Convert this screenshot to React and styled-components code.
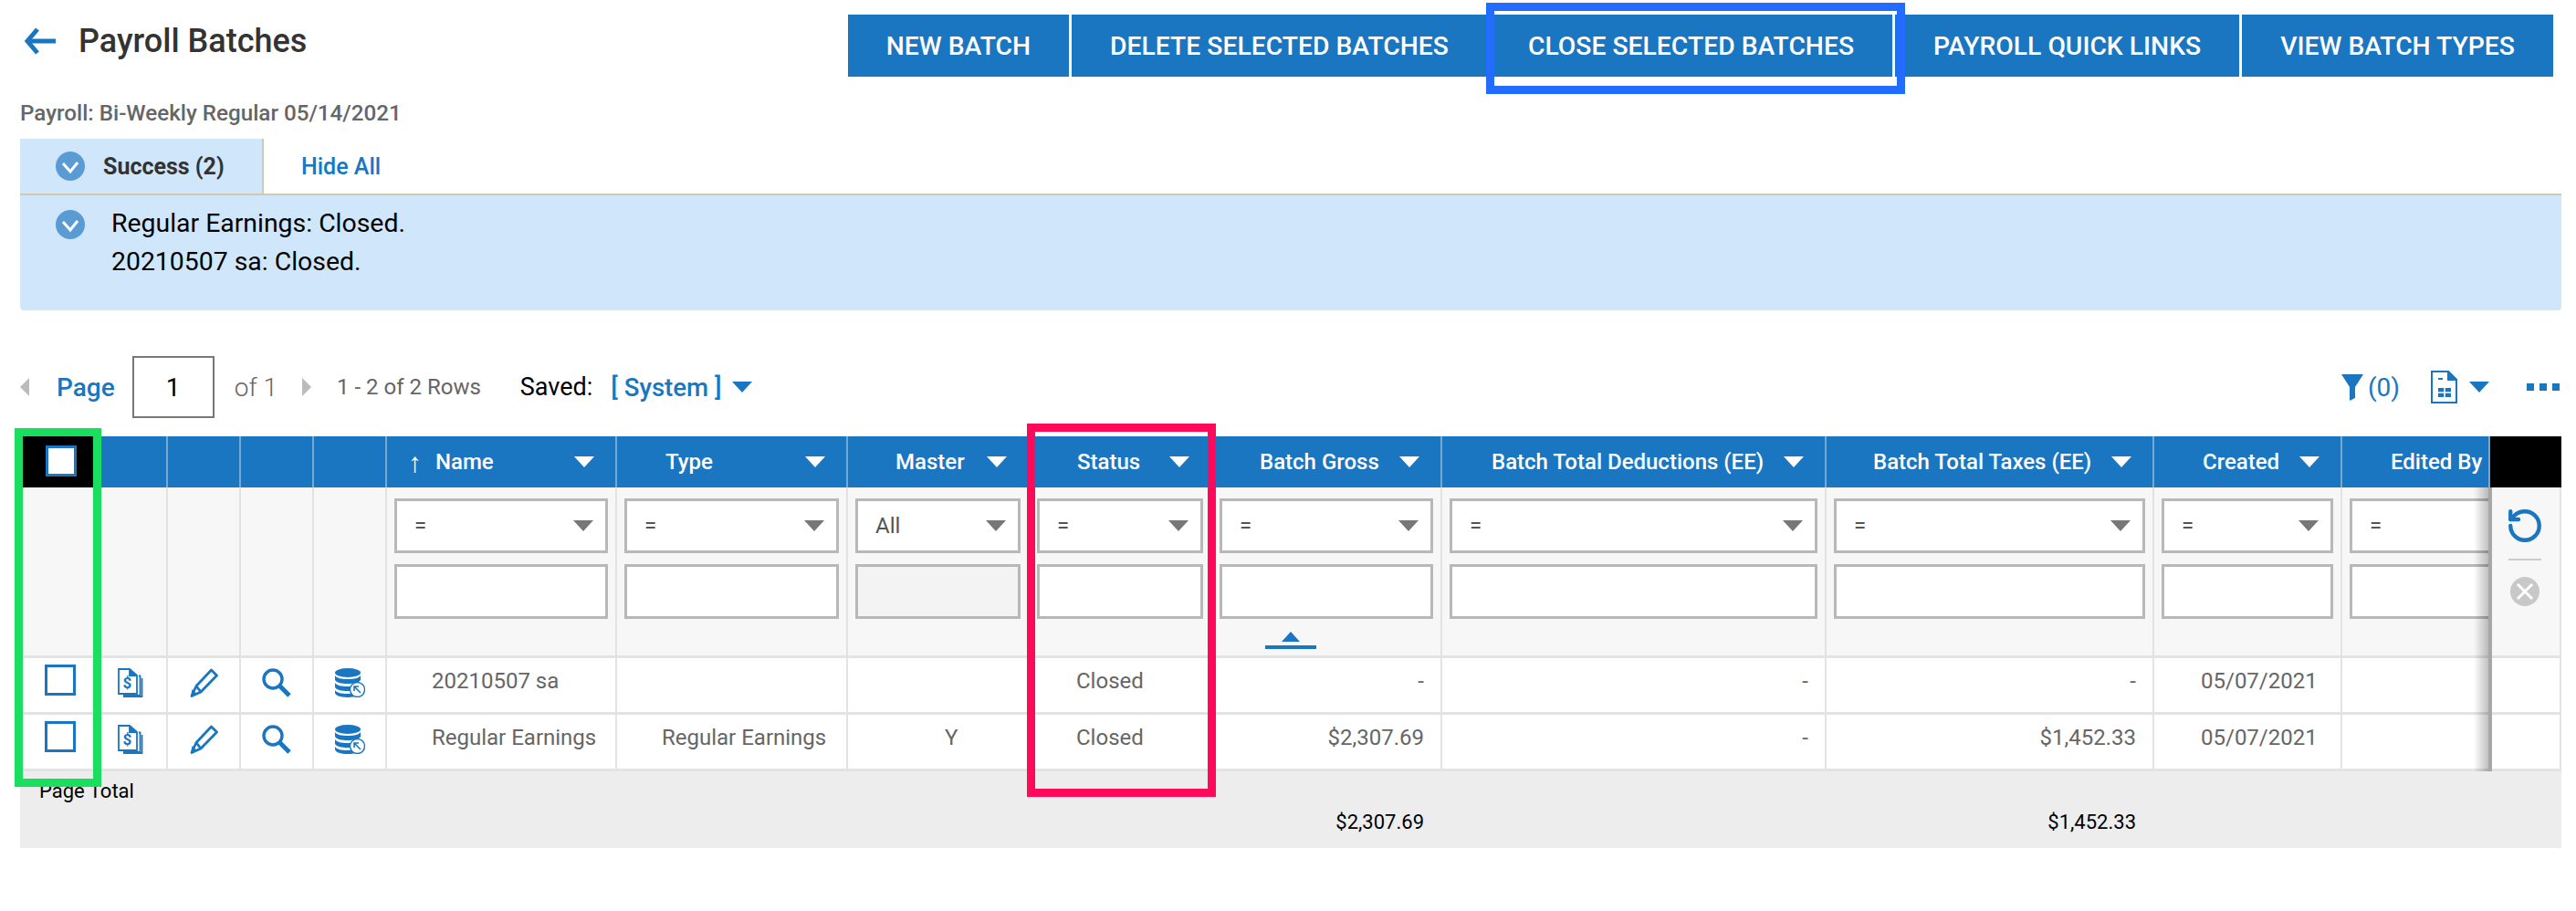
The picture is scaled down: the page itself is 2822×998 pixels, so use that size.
import { RotateCcw } from 'lucide-react';
import styled, { createGlobalStyle } from 'styled-components';

const BLUE = '#1a76c0';
const COLS = '82px 80px 80px 80px 80px 252px 253px 199px 200px 252px 421px 359px 206px 162px 78px';

const GlobalStyle = createGlobalStyle`
  html, body { margin: 0; padding: 0; background: #fff; }
  body { font-family: Roboto, "Liberation Sans", sans-serif; }
`;

const Page = styled.div`
  position: relative;
  width: 2822px;
  height: 998px;
  overflow: hidden;
  padding: 16px 16px 0 22px;
  box-sizing: border-box;
`;

const TopBar = styled.header`
  display: flex;
  justify-content: space-between;
  height: 68px;
  padding-right: 9px;
`;

const TitleWrap = styled.div`
  display: flex;
  align-items: center;
  gap: 24px;
  height: 58px;
  margin-left: 4px;
`;

const Title = styled.h1`
  margin: 0;
  font-size: 36px;
  font-weight: 500;
  color: #333;
`;

const Buttons = styled.div`
  display: flex;
  gap: 3px;
`;

const ActionButton = styled.button`
  height: 68px;
  padding: 0 42px;
  border: 0;
  background: ${BLUE};
  color: #fff;
  font: 500 28.3px Roboto, sans-serif;
  white-space: nowrap;
`;

const PayrollLine = styled.div`
  margin-top: 26px;
  height: 28px;
  line-height: 28px;
  font-size: 24.2px;
  font-weight: 500;
  color: #666;
`;

const TabBar = styled.div`
  display: flex;
  height: 60px;
  margin-top: 14px;
  border-bottom: 2px solid #d2c9ae;
`;

const SuccessTab = styled.div`
  display: flex;
  align-items: center;
  gap: 20px;
  width: 267px;
  padding-left: 39px;
  box-sizing: border-box;
  background: #d0e7fb;
  border-right: 2px solid #d2c9ae;
  font-size: 25px;
  font-weight: 700;
  color: #333;
`;

const HideAll = styled.a`
  align-self: center;
  margin-left: 41px;
  font-size: 25px;
  font-weight: 500;
  color: ${BLUE};
`;

const MessagePanel = styled.section`
  display: flex;
  gap: 29px;
  height: 126px;
  padding: 16px 0 0 39px;
  box-sizing: border-box;
  background: #d0e7fb;
  border-radius: 0 0 4px 4px;
  color: #000;
  font-size: 28.4px;
  line-height: 42px;
`;

const MessageText = styled.div`
  margin-top: -6px;
`;

const Pager = styled.div`
  display: flex;
  align-items: center;
  height: 68px;
  margin-top: 50px;
  font-size: 24px;
  color: #666;
`;

const PageLabel = styled.a`
  margin: 0 19px 0 30px;
  font-size: 28px;
  font-weight: 500;
  color: ${BLUE};
`;

const PageInput = styled.div`
  display: flex;
  align-items: center;
  justify-content: center;
  width: 90px;
  height: 68px;
  box-sizing: border-box;
  border: 2px solid #777;
  color: #000;
  font-size: 28px;
`;

const OfText = styled.span`
  margin: 0 27px 0 22px;
  font-size: 28px;
  font-weight: 300;
`;

const RowsText = styled.span`
  margin-left: 28px;
  font-size: 24px;
`;

const SavedLabel = styled.span`
  margin-left: 43px;
  font-size: 27px;
  color: #000;
`;

const SavedValue = styled.a`
  margin: 0 12px 0 20px;
  font-size: 27.6px;
  font-weight: 500;
  color: ${BLUE};
`;

const Triangle = styled.i`
  display: block;
  flex: none;
  width: 0;
  height: 0;
  border-style: solid;
  border-color: transparent;
  ${(p) => p.$dir === 'left' && `border-width: 10px 10px 10px 0; border-right-color: ${p.$color};`}
  ${(p) => p.$dir === 'right' && `border-width: 10px 0 10px 10px; border-left-color: ${p.$color};`}
  ${(p) => p.$dir === 'down' && `border-width: 12px 11px 0; border-top-color: ${p.$color};`}
  ${(p) => p.$dir === 'up' && `border-width: 0 10px 11px; border-bottom-color: ${p.$color};`}
`;

const PagerRight = styled.div`
  display: flex;
  align-items: center;
  margin-left: auto;
  color: ${BLUE};
`;

const FilterCount = styled.span`
  margin: 0 34px 0 5px;
  font-size: 28px;
`;

const SheetGap = styled.span`
  width: 13px;
`;

const Dots = styled.div`
  display: flex;
  gap: 6px;
  margin-left: 41px;
  margin-right: 2px;
  span { width: 8px; height: 8px; background: ${BLUE}; }
`;

const Table = styled.div`
  position: relative;
  width: 2784px;
  margin-top: 20px;
`;

const Row = styled.div`
  display: grid;
  grid-template-columns: ${COLS};
  height: ${(p) => p.$h}px;
`;

const HeadCell = styled.div`
  display: flex;
  align-items: center;
  padding: 0 23px 0 ${(p) => p.$pad || 0}px;
  box-sizing: border-box;
  overflow: hidden;
  white-space: nowrap;
  background: ${(p) => (p.$black ? '#000' : BLUE)};
  border-right: 2px solid ${(p) => (p.$black ? '#000' : '#74a9d6')};
  color: #fff;
  font-size: 24px;
  font-weight: 500;
`;

const SortArrow = styled.span`
  margin-right: 15px;
  font-size: 30px;
  font-weight: 400;
`;

const HeadCaret = styled.span`
  margin-left: auto;
`;

const HeadCheckbox = styled.div`
  flex: none;
  width: 34px;
  height: 34px;
  margin: -2px 0 0 28px;
  box-sizing: border-box;
  background: #fff;
  border: 3px solid ${BLUE};
`;

const FilterCell = styled.div`
  position: relative;
  display: flex;
  flex-direction: column;
  gap: 12px;
  padding: 12px 8px 0;
  box-sizing: border-box;
  overflow: ${(p) => (p.$frozen ? 'visible' : 'hidden')};
  background: #f7f7f7;
  border-right: 2px solid #e3e3e3;
  border-bottom: 3px solid #e3e3e3;
`;

const SelectBox = styled.div`
  display: flex;
  align-items: center;
  justify-content: space-between;
  flex: none;
  width: ${(p) => p.$width || 'auto'};
  height: 60px;
  padding: 0 13px 0 19px;
  box-sizing: border-box;
  background: #fff;
  border: 3px solid #b8b8b8;
  color: #555;
  font-size: 24px;
`;

const TextBox = styled.div`
  flex: none;
  width: ${(p) => p.$width || 'auto'};
  height: 60px;
  box-sizing: border-box;
  background: ${(p) => (p.$disabled ? '#f3f3f3' : '#fff')};
  border: 3px solid #b8b8b8;
`;

const DataCell = styled.div`
  position: relative;
  display: flex;
  justify-content: ${(p) => (p.$right ? 'flex-end' : 'flex-start')};
  padding: 11px ${(p) => (p.$right ? 18 : 0)}px 0 ${(p) => p.$pad || 0}px;
  box-sizing: border-box;
  background: #fff;
  border-right: 2px solid #e3e3e3;
  border-bottom: 3px solid #e3e3e3;
  color: #666;
  font-size: 24px;
  line-height: 28px;
  white-space: nowrap;
`;

const IconCell = styled(DataCell)`
  justify-content: center;
`;

const Checkbox = styled.div`
  width: 34px;
  height: 34px;
  margin: -4px 0 0 8px;
  box-sizing: border-box;
  border: 3px solid ${BLUE};
`;

const FrozenEdge = styled.div`
  position: absolute;
  top: 0;
  bottom: -3px;
  left: -18px;
  width: 18px;
  background: linear-gradient(to right, rgba(0, 0, 0, 0), rgba(0, 0, 0, 0.28));
  border-right: 2px solid #a8a8a8;
`;

const ResetTools = styled.div`
  display: flex;
  flex-direction: column;
  align-items: center;
  padding-top: 9px;
  width: 100%;
`;

const ToolRule = styled.div`
  width: 36px;
  height: 2px;
  margin: 15px 0 18px;
  background: #ccc;
`;

const ClearIcon = styled.div`
  display: flex;
  align-items: center;
  justify-content: center;
  width: 32px;
  height: 32px;
  border-radius: 50%;
  background: #c8c8c8;
`;

const ExpandToggle = styled.div`
  position: absolute;
  left: 1364px;
  top: 214px;
  display: flex;
  flex-direction: column;
  align-items: center;
  gap: 4px;
  width: 56px;
  &::after {
    content: '';
    width: 56px;
    height: 4px;
    background: ${BLUE};
  }
`;

const Footer = styled.div`
  height: 84px;
  background: #ededed;
  color: #000;
  font-size: 22px;
`;

const FooterLabel = styled.div`
  height: 42px;
  padding: 8px 0 0 21px;
  box-sizing: border-box;
  line-height: 28px;
`;

const FooterAmounts = styled(Row)`
  line-height: 28px;
`;

const FooterAmount = styled.div`
  padding-right: 20px;
  text-align: right;
`;

const Annotation = styled.div`
  position: absolute;
  left: ${(p) => p.$x}px;
  top: ${(p) => p.$y}px;
  width: ${(p) => p.$w}px;
  height: ${(p) => p.$h}px;
  box-sizing: border-box;
  border: 9px solid ${(p) => p.$color};
  pointer-events: none;
`;

const BackArrow = () => (
  <svg width="36" height="30" viewBox="0 0 36 30" fill="none" stroke={BLUE} strokeWidth="5">
    <path d="M35 15H5" />
    <path d="M15 2 4 15l11 13" />
  </svg>
);

const CheckCircle = () => (
  <svg width="32" height="32" viewBox="0 0 32 32">
    <circle cx="16" cy="16" r="16" fill="#5b9bd5" />
    <path d="M8 13l8 9 8-10" fill="none" stroke="#fff" strokeWidth="3" />
  </svg>
);

const DocIcon = () => (
  <svg width="28" height="32" viewBox="0 0 28 32" fill="none" stroke={BLUE} strokeWidth="1.8">
    <path d="M1 1h12l8 7v20H1z" fill="#fff" />
    <path d="M13 1v7h8" fill={BLUE} />
    <path d="M23 8.5h1.5V30H6" />
    <path d="M26.5 11v20H6" />
    <text x="10.5" y="22" fontSize="17" fontWeight="700" fill={BLUE} stroke="none" textAnchor="middle" fontFamily="Roboto">$</text>
  </svg>
);

const PencilIcon = () => (
  <svg width="32" height="32" viewBox="0 0 32 32" fill="none" stroke={BLUE} strokeWidth="2.8" strokeLinejoin="round">
    <path d="M8 19.5 24.5 2l6 6L13 26l-10 4.5z" />
    <path d="M8 19.5l5 6.5" />
    <path d="M2 31l1.5-8 5.5 5.5z" fill={BLUE} stroke="none" />
  </svg>
);

const SearchIcon = () => (
  <svg width="32" height="32" viewBox="0 0 32 32" fill="none" stroke={BLUE}>
    <circle cx="12" cy="12" r="10" strokeWidth="3.4" />
    <path d="M19 19l11 11" strokeWidth="5" />
  </svg>
);

const DatabaseIcon = () => (
  <svg width="33" height="32" viewBox="0 0 33 32">
    <ellipse cx="14" cy="5" rx="14" ry="5" fill={BLUE} />
    <path d="M0 8c2 3 7 4 14 4s12-1 14-4v5c-2 3-7 4-14 4S2 16 0 13z" fill={BLUE} />
    <path d="M0 16c2 3 7 4 14 4s12-1 14-4v5c-2 3-7 4-14 4S2 24 0 21z" fill={BLUE} />
    <path d="M0 24c2 3 7 4 14 4s12-1 14-4v3c-2 3-7 5-14 5S0 30 0 27z" fill={BLUE} />
    <circle cx="24.5" cy="23.5" r="8" fill="#fff" stroke={BLUE} strokeWidth="1.4" />
    <path d="M28 27l-6.5-6.5M21 25v-5h5" fill="none" stroke={BLUE} strokeWidth="1.6" />
  </svg>
);

const FunnelIcon = () => (
  <svg width="24" height="29" viewBox="0 0 24 29" fill={BLUE}>
    <path d="M0 0h24L15 14v12l-6 3V14z" />
  </svg>
);

const SheetIcon = () => (
  <svg width="29" height="36" viewBox="0 0 29 36" fill="none" stroke={BLUE} strokeWidth="2">
    <path d="M1 1h18l9 9v25H1z" fill="#fff" />
    <path d="M19 1v9h9z" fill={BLUE} />
    <path d="M8 9h5" />
    <rect x="8" y="19" width="14" height="10" fill={BLUE} stroke="none" />
    <path d="M15 19v10M8 24h14" stroke="#fff" strokeWidth="1.6" />
  </svg>
);

const COLUMNS = [
  { label: 'Name', pad: 23, sort: true },
  { label: 'Type', pad: 53 },
  { label: 'Master', pad: 52, value: 'All', disabled: true },
  { label: 'Status', pad: 52 },
  { label: 'Batch Gross', pad: 52 },
  { label: 'Batch Total Deductions (EE)', pad: 54 },
  { label: 'Batch Total Taxes (EE)', pad: 51 },
  { label: 'Created', pad: 53 },
  { label: 'Edited By', pad: 53, clipped: true },
];

const ROWS = [
  { name: '20210507 sa', type: '', master: '', gross: '-', ded: '-', tax: '-' },
  { name: 'Regular Earnings', type: 'Regular Earnings', master: 'Y', gross: '$2,307.69', ded: '-', tax: '$1,452.33' },
];

const Blank = () => <FilterCell />;

export default function App() {
  return (
    <Page>
      <GlobalStyle />
      <TopBar>
        <TitleWrap>
          <BackArrow />
          <Title>Payroll Batches</Title>
        </TitleWrap>
        <Buttons>
          <ActionButton>NEW BATCH</ActionButton>
          <ActionButton>DELETE SELECTED BATCHES</ActionButton>
          <ActionButton>CLOSE SELECTED BATCHES</ActionButton>
          <ActionButton>PAYROLL QUICK LINKS</ActionButton>
          <ActionButton>VIEW BATCH TYPES</ActionButton>
        </Buttons>
      </TopBar>

      <PayrollLine>Payroll: Bi-Weekly Regular 05/14/2021</PayrollLine>

      <TabBar>
        <SuccessTab>
          <CheckCircle />
          Success (2)
        </SuccessTab>
        <HideAll>Hide All</HideAll>
      </TabBar>
      <MessagePanel>
        <div>
          <CheckCircle />
        </div>
        <MessageText>
          Regular Earnings: Closed.
          <br />
          20210507 sa: Closed.
        </MessageText>
      </MessagePanel>

      <Pager>
        <Triangle $dir="left" $color="#bbb" />
        <PageLabel>Page</PageLabel>
        <PageInput>1</PageInput>
        <OfText>of 1</OfText>
        <Triangle $dir="right" $color="#bbb" />
        <RowsText>1 - 2 of 2 Rows</RowsText>
        <SavedLabel>Saved:</SavedLabel>
        <SavedValue>[ System ]</SavedValue>
        <Triangle $dir="down" $color={BLUE} />
        <PagerRight>
          <FunnelIcon />
          <FilterCount>(0)</FilterCount>
          <SheetIcon />
          <SheetGap />
          <Triangle $dir="down" $color={BLUE} />
          <Dots>
            <span />
            <span />
            <span />
          </Dots>
        </PagerRight>
      </Pager>

      <Table>
        <Row $h={56}>
          <HeadCell $black>
            <HeadCheckbox />
          </HeadCell>
          <HeadCell />
          <HeadCell />
          <HeadCell />
          <HeadCell />
          {COLUMNS.map((c) => (
            <HeadCell key={c.label} $pad={c.pad}>
              {c.sort && <SortArrow>↑</SortArrow>}
              {c.label}
              {!c.clipped && (
                <HeadCaret>
                  <Triangle $dir="down" $color="#fff" />
                </HeadCaret>
              )}
            </HeadCell>
          ))}
          <HeadCell $black />
        </Row>

        <Row $h={187}>
          <Blank />
          <Blank />
          <Blank />
          <Blank />
          <Blank />
          {COLUMNS.map((c) => (
            <FilterCell key={c.label}>
              <SelectBox $width={c.clipped ? '200px' : undefined}>
                {c.value || '='}
                <Triangle $dir="down" $color="#777" />
              </SelectBox>
              <TextBox $width={c.clipped ? '200px' : undefined} $disabled={c.disabled} />
            </FilterCell>
          ))}
          <FilterCell $frozen>
            <FrozenEdge />
            <ResetTools>
              <RotateCcw size={42} color={BLUE} strokeWidth={2.5} />
              <ToolRule />
              <ClearIcon>
                <svg width="20" height="20" viewBox="0 0 20 20" stroke="#fff" strokeWidth="3">
                  <path d="M2 2l16 16M18 2L2 18" />
                </svg>
              </ClearIcon>
            </ResetTools>
          </FilterCell>
        </Row>

        {ROWS.map((r) => (
          <Row key={r.name} $h={62}>
            <IconCell>
              <Checkbox />
            </IconCell>
            <IconCell>
              <DocIcon />
            </IconCell>
            <IconCell>
              <PencilIcon />
            </IconCell>
            <IconCell>
              <SearchIcon />
            </IconCell>
            <IconCell>
              <DatabaseIcon />
            </IconCell>
            <DataCell $pad={49}>{r.name}</DataCell>
            <DataCell $pad={49}>{r.type}</DataCell>
            <DataCell $pad={106}>{r.master}</DataCell>
            <DataCell $pad={51}>Closed</DataCell>
            <DataCell $right>{r.gross}</DataCell>
            <DataCell $right>{r.ded}</DataCell>
            <DataCell $right>{r.tax}</DataCell>
            <DataCell $pad={51}>05/07/2021</DataCell>
            <DataCell />
            <DataCell>
              <FrozenEdge />
            </DataCell>
          </Row>
        ))}

        <ExpandToggle>
          <Triangle $dir="up" $color={BLUE} />
        </ExpandToggle>

        <Footer>
          <FooterLabel>Page Total</FooterLabel>
          <FooterAmounts $h={42}>
            {Array.from({ length: 9 }).map((_, i) => (
              <div key={i} />
            ))}
            <FooterAmount>$2,307.69</FooterAmount>
            <div />
            <FooterAmount>$1,452.33</FooterAmount>
          </FooterAmounts>
        </Footer>
      </Table>

      <Annotation $x={1628} $y={3} $w={459} $h={100} $color="#226cff" />
      <Annotation $x={16} $y={469} $w={95} $h={393} $color="#1adf5e" />
      <Annotation $x={1125} $y={464} $w={207} $h={409} $color="#ff0a5a" />
    </Page>
  );
}
